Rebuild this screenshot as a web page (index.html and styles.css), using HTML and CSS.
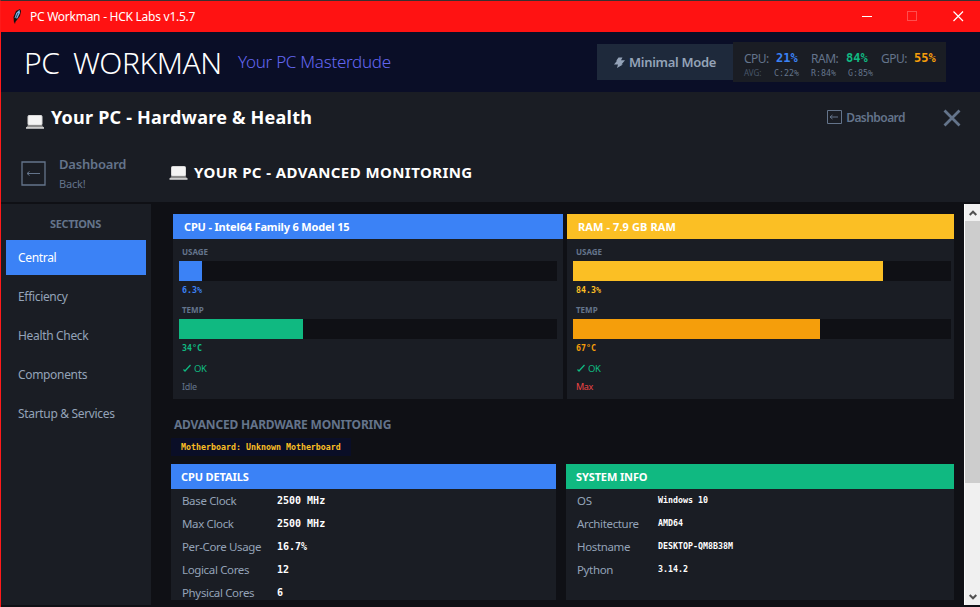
FILE: index.html
```html
<!DOCTYPE html>
<html lang="en">
<head>
  <meta charset="UTF-8" />
  <meta name="viewport" content="width=device-width, initial-scale=1.0"/>
  <title>PC Workman - HCK Labs v1.5.7</title>
  <link rel="stylesheet" href="styles.css">
</head>
<body>
  <div class="window">

    <!-- Title bar -->
    <div class="titlebar">
      <svg class="feather" width="10" height="17" viewBox="0 0 10 17">
        <path d="M2 15 L1.5 9 L4 3 L8 1 L9 3 L8 8 L4.5 12.5 Z" fill="#111"/>
        <path d="M2.600 10 L4.200 5 L7.5 1.800 L8 5 L5.300 10.5 Z" fill="#7db4ea"/>
        <path d="M2.8 15.5 L3.5 10.500 L6 5" stroke="#111" stroke-width="0.7" fill="none"/>
      </svg>
      <span class="titlebar-text">PC Workman - HCK Labs v1.5.7</span>
      <svg class="controls" width="102" height="12" viewBox="0 0 102 12">
        <path d="M0 5.5h10" stroke="#fff"/>
        <rect x="45.5" y="0.5" width="9" height="9" fill="none" stroke="#ff4e4e"/>
        <path d="M91.5 0.5l9.5 9.5M101 0.5l-9.5 9.5" stroke="#fff" stroke-width="1.2"/>
      </svg>
    </div>

    <!-- App header -->
    <header class="header">
      <h1 class="logo">PC WORKMAN</h1>
      <span class="tagline">Your PC Masterdude</span>
      <button class="mode-btn">
        <svg width="11" height="11" viewBox="0 0 11 11"><path d="M4.500 0.5H8.500L7 3.300H11L7.500 7.500H9L3 11L4 7.500H0L3 3.800H2.200Z" fill="#94a3b8"/></svg>
        <span>Minimal Mode</span>
      </button>
      <div class="stats">
        <div class="stats-row">
          <span class="k k-cpu">CPU:</span><b class="v blue">21%</b>
          <span class="k k-ram">RAM:</span><b class="v green">84%</b>
          <span class="k k-gpu">GPU:</span><b class="v orange">55%</b>
        </div>
        <div class="avg-row">
          <span class="avg-label">AVG:</span><span class="avg">C:22%</span><span class="avg">R:84%</span><span class="avg">G:85%</span>
        </div>
      </div>
    </header>

    <!-- Page heading -->
    <section class="page-head">
      <div class="head-row">
        <svg class="laptop" width="18" height="14" viewBox="0 0 18 14">
          <rect x="2" y="0.5" width="14" height="9.5" rx="1" fill="#f4f4f4" stroke="#d8d8d8"/>
          <path d="M2 10h14l2 3H0z" fill="#8b8b8b"/><path d="M0 13h18" stroke="#e8e8e8" stroke-width="1.4"/>
        </svg>
        <h2 class="page-title">Your PC - Hardware &amp; Health</h2>
        <a class="dash-link">
          <svg width="15" height="14" viewBox="0 0 15 14" fill="none" stroke="#64748b"><path d="M.5.5h14v13H.5zM3 7h8M5.5 5L3 7l2.500 2" /></svg>
          <span>Dashboard</span>
        </a>
        <svg class="close" width="18" height="18" viewBox="0 0 18 18"><path d="M1.500 1.500l15 15M16.500 1.500l-15 15" stroke="#64748b" stroke-width="2.800"/></svg>
      </div>
      <div class="sub-row">
        <svg class="back-icon" width="25" height="25" viewBox="0 0 25 25" fill="none" stroke="#64748b"><path d="M1 1h23v23H1z" stroke-width="1.300"/><path d="M6 12.500h13M8.500 10.500l-2.500 2 2.500 2"/></svg>
        <div class="back">
          <div class="back-title">Dashboard</div>
          <div class="back-sub">Back!</div>
        </div>
        <svg class="laptop" width="19" height="14" viewBox="0 0 18 14">
          <rect x="2" y="0.5" width="14" height="9.5" rx="1" fill="#f4f4f4" stroke="#d8d8d8"/>
          <path d="M2 10h14l2 3H0z" fill="#8b8b8b"/><path d="M0 13h18" stroke="#e8e8e8" stroke-width="1.4"/>
        </svg>
        <h3 class="sub-title">YOUR PC - ADVANCED MONITORING</h3>
      </div>
    </section>

    <div class="body">
      <!-- Sidebar -->
      <nav class="sidebar">
        <div class="nav-head">SECTIONS</div>
        <a class="nav-item active">Central</a>
        <a class="nav-item">Efficiency</a>
        <a class="nav-item">Health Check</a>
        <a class="nav-item">Components</a>
        <a class="nav-item">Startup &amp; Services</a>
      </nav>

      <main class="content">
        <!-- Live meters -->
        <div class="meters">
          <div class="card">
            <div class="card-head bg-blue tight">CPU - Intel64 Family 6 Model 15</div>
            <div class="label">USAGE</div>
            <div class="track"><div class="fill bg-blue" style="width: 23px"></div></div>
            <div class="reading blue">6.3%</div>
            <div class="label">TEMP</div>
            <div class="track"><div class="fill bg-green" style="width: 124px"></div></div>
            <div class="reading green">34°C</div>
            <div class="status"><svg width="8" height="8" viewBox="0 0 8 8"><path d="M0.500 5.500L2 7L7.500 1" stroke="#10b981" stroke-width="1.300" fill="none"/></svg>OK</div>
            <div class="note">Idle</div>
          </div>
          <div class="card">
            <div class="card-head bg-yellow">RAM - 7.9 GB RAM</div>
            <div class="label">USAGE</div>
            <div class="track"><div class="fill bg-yellow" style="width: 310px"></div></div>
            <div class="reading yellow">84.3%</div>
            <div class="label">TEMP</div>
            <div class="track"><div class="fill bg-orange" style="width: 247px"></div></div>
            <div class="reading orange">67°C</div>
            <div class="status"><svg width="8" height="8" viewBox="0 0 8 8"><path d="M0.500 5.500L2 7L7.500 1" stroke="#10b981" stroke-width="1.300" fill="none"/></svg>OK</div>
            <div class="note red">Max</div>
          </div>
        </div>

        <h4 class="adv-title">ADVANCED HARDWARE MONITORING</h4>
        <div class="board">Motherboard: Unknown Motherboard</div>

        <!-- Details -->
        <div class="details">
          <div class="panel">
            <div class="panel-head bg-blue">CPU DETAILS</div>
            <div class="row"><span class="name">Base Clock</span><b>2500 MHz</b></div>
            <div class="row"><span class="name">Max Clock</span><b>2500 MHz</b></div>
            <div class="row"><span class="name">Per-Core Usage</span><b>16.7%</b></div>
            <div class="row"><span class="name">Logical Cores</span><b>12</b></div>
            <div class="row"><span class="name">Physical Cores</span><b>6</b></div>
          </div>
          <div class="panel system">
            <div class="panel-head bg-green">SYSTEM INFO</div>
            <div class="row"><span class="name">OS</span><b>Windows 10</b></div>
            <div class="row"><span class="name">Architecture</span><b>AMD64</b></div>
            <div class="row"><span class="name">Hostname</span><b>DESKTOP-QM8B38M</b></div>
            <div class="row"><span class="name">Python</span><b>3.14.2</b></div>
          </div>
        </div>
      </main>

      <!-- Scrollbar -->
      <div class="scrollbar">
        <div class="arrow"><svg width="8" height="6" viewBox="0 0 8 6"><path d="M0.700 5L4 1.700L7.300 5" stroke="#505050" stroke-width="2" fill="none"/></svg></div>
        <div class="thumb"></div>
        <div class="arrow down"><svg width="8" height="6" viewBox="0 0 8 6"><path d="M0.700 1L4 4.300L7.300 1" stroke="#505050" stroke-width="2" fill="none"/></svg></div>
      </div>
    </div>
  </div>
</body>
</html>
```

FILE: styles.css
```css
* {
  margin: 0;
  padding: 0;
  box-sizing: border-box;
}

body {
  width: 980px;
  height: 607px;
  overflow: hidden;
  background: #0f1015;
  font-family: "Noto Sans", "Open Sans", sans-serif;
  color: #fff;
  white-space: nowrap;
}

svg {
  display: block;
  flex: none;
}

.window {
  height: 607px;
  border-left: 1px solid #ff1a1a;
  border-top: 1px solid #3a3030;
  display: flex;
  flex-direction: column;
}

.blue { color: #3b82f6; }
.green { color: #10b981; }
.yellow { color: #fbbf24; }
.orange { color: #f59e0b; }
.bg-blue { background: #3b82f6; }
.bg-green { background: #10b981; }
.bg-yellow { background: #fbbf24; }
.bg-orange { background: #f59e0b; }

/* Title bar */
.titlebar {
  height: 31px;
  flex: none;
  background: #ff1212;
  display: flex;
  align-items: center;
  padding: 0 16px 0 11px;
}

.titlebar-text {
  font-size: 12px;
  letter-spacing: -0.26px;
  margin-left: 8px;
}

.controls {
  margin-left: auto;
}

/* Header */
.header {
  height: 60px;
  flex: none;
  background: #0a0e27;
  display: flex;
  align-items: flex-start;
  padding: 10px 34px 0 23px;
}

.logo {
  font-size: 30px;
  font-weight: 300;
  line-height: 42px;
  letter-spacing: -0.4px;
  word-spacing: 6px;
  width: 214px;
}

.tagline {
  font-size: 17px;
  font-weight: 300;
  line-height: 40px;
  letter-spacing: -0.28px;
  color: #6366f1;
}

.mode-btn {
  margin: 2px 0 0 auto;
  width: 136px;
  height: 36px;
  border: 0;
  background: #1e293b;
  color: #94a3b8;
  font: 600 13px "Noto Sans", sans-serif;
  letter-spacing: -0.3px;
  display: flex;
  align-items: center;
  padding-left: 17px;
  gap: 4px;
}

.stats {
  width: 213px;
  height: 40px;
  background: #1a1d24;
  padding: 7px 0 0 11px;
}

.stats-row {
  display: flex;
  height: 18px;
  line-height: 19px;
}

.k {
  flex: none;
  font-size: 12px;
  letter-spacing: -0.5px;
  color: #64748b;
}

.k-cpu { width: 32px; }
.k-ram { width: 35px; }
.k-gpu { width: 33px; }

.v {
  flex: none;
  font: 700 12px/19px "DejaVu Sans Mono", monospace;
  width: 35px;
}

.avg-row {
  display: flex;
  line-height: 12px;
  font-size: 8px;
  color: #475569;
}

.avg-label {
  width: 30px;
}

.avg {
  font: 8.300px/12px "DejaVu Sans Mono", monospace;
  color: #64748b;
  width: 37px;
}

/* Page heading */
.page-head {
  height: 110px;
  flex: none;
  background: #1a1d24;
}

.head-row {
  display: flex;
  align-items: center;
  height: 52px;
  padding: 0 19px 0 25px;
}

.head-row .laptop {
  margin-top: 8px;
}

.page-title {
  font-size: 18px;
  font-weight: 700;
  line-height: 24px;
  letter-spacing: 0.22px;
  margin: 0 0 2px 7px;
}

.dash-link {
  margin: 0 0 2px auto;
  display: flex;
  align-items: center;
  gap: 4px;
  color: #64748b;
  font-size: 12px;
  font-weight: 600;
  letter-spacing: -0.55px;
}

.close {
  margin-left: 38px;
}

.sub-row {
  display: flex;
  align-items: center;
  height: 58px;
  padding-left: 20px;
}

.back {
  width: 110px;
  margin: 2px 0 0 13px;
  color: #64748b;
}

.back-title {
  font-size: 13px;
  font-weight: 600;
  line-height: 19px;
  letter-spacing: -0.2px;
}

.back-sub {
  font-size: 11px;
  line-height: 20px;
  letter-spacing: -0.2px;
}

.sub-title {
  font-size: 15px;
  font-weight: 700;
  letter-spacing: 0.42px;
  margin: 0 0 2px 6px;
}

/* Body */
.body {
  margin-top: 2px;
  height: 401px;
  flex: none;
  display: flex;
}

.sidebar {
  width: 150px;
  background: #1a1d24;
  padding: 10px 5px 0;
}

.nav-head {
  height: 26px;
  line-height: 20px;
  padding-right: 1px;
  text-align: center;
  font-size: 11px;
  font-weight: 700;
  letter-spacing: -0.35px;
  color: #64748b;
}

.nav-item {
  display: block;
  height: 35px;
  line-height: 36px;
  margin-bottom: 4px;
  padding-left: 12px;
  font-size: 12px;
  letter-spacing: -0.33px;
  color: #94a3b8;
}

.nav-item.active {
  background: #3b82f6;
  color: #fff;
}

.content {
  width: 813px;
  padding: 10px 10px 0 20px;
}

.meters {
  display: grid;
  grid-template-columns: 390px 387px;
  gap: 4px;
  margin-left: 2px;
}

.card {
  background: #1a1d24;
  height: 185px;
}

.card-head {
  height: 25px;
  line-height: 25px;
  padding-left: 11px;
  font-size: 11px;
  font-weight: 700;
  letter-spacing: 0.1px;
}

.card-head.tight {
  letter-spacing: -0.17px;
}

.label {
  height: 22px;
  line-height: 26px;
  padding-left: 9px;
  font-size: 8px;
  font-weight: 700;
  color: #64748b;
}

.track {
  height: 20px;
  margin: 0 6px;
  background: #0f1015;
}

.card:last-child .track {
  margin-right: 3px;
}

.fill {
  height: 100%;
}

.reading {
  height: 16px;
  padding-left: 9px;
  font: 700 8.300px/19px "DejaVu Sans Mono", monospace;
}

.status {
  display: flex;
  align-items: center;
  gap: 3px;
  height: 23px;
  padding: 3px 0 0 10px;
  font-size: 9.500px;
  letter-spacing: -0.4px;
  color: #10b981;
}

.note {
  padding-left: 9px;
  font-size: 9px;
  line-height: 18px;
  letter-spacing: -0.3px;
  color: #64748b;
}

.note.red {
  color: #ef4444;
}

.adv-title {
  margin: 16px 0 0 3px;
  font-size: 12px;
  font-weight: 700;
  line-height: 20px;
  letter-spacing: -0.18px;
  color: #64748b;
}

.board {
  width: 180px;
  height: 18px;
  margin-top: 3px;
  padding-left: 10px;
  background: #0a0e27;
  color: #fbbf24;
  font: 700 8.300px/19px "DejaVu Sans Mono", monospace;
}

.details {
  display: grid;
  grid-template-columns: 385px 388px;
  gap: 10px;
  margin-top: 8px;
}

.panel {
  height: 136px;
  overflow: hidden;
  background: #1a1d24;
}

.panel-head {
  height: 25px;
  line-height: 26px;
  padding-left: 10px;
  font-size: 11px;
  font-weight: 700;
  letter-spacing: -0.12px;
}

.row {
  display: flex;
  height: 23px;
  line-height: 23px;
  padding-left: 11px;
}

.name {
  width: 95px;
  font-size: 11.500px;
  letter-spacing: -0.35px;
  color: #94a3b8;
}

.row b {
  font: 700 10px/24px "DejaVu Sans Mono", monospace;
}

.system .name {
  width: 81px;
}

.system .row b {
  font-size: 8.300px;
  line-height: 22px;
}

/* Scrollbar */
.scrollbar {
  width: 16px;
  background: #f0f0f0;
  border-left: 1px solid #fff;
  display: flex;
  flex-direction: column;
}

.arrow {
  height: 17px;
  display: flex;
  align-items: center;
  justify-content: center;
}

.thumb {
  height: 262px;
  background: #cdcdcd;
}

.down {
  margin-top: auto;
}
```
